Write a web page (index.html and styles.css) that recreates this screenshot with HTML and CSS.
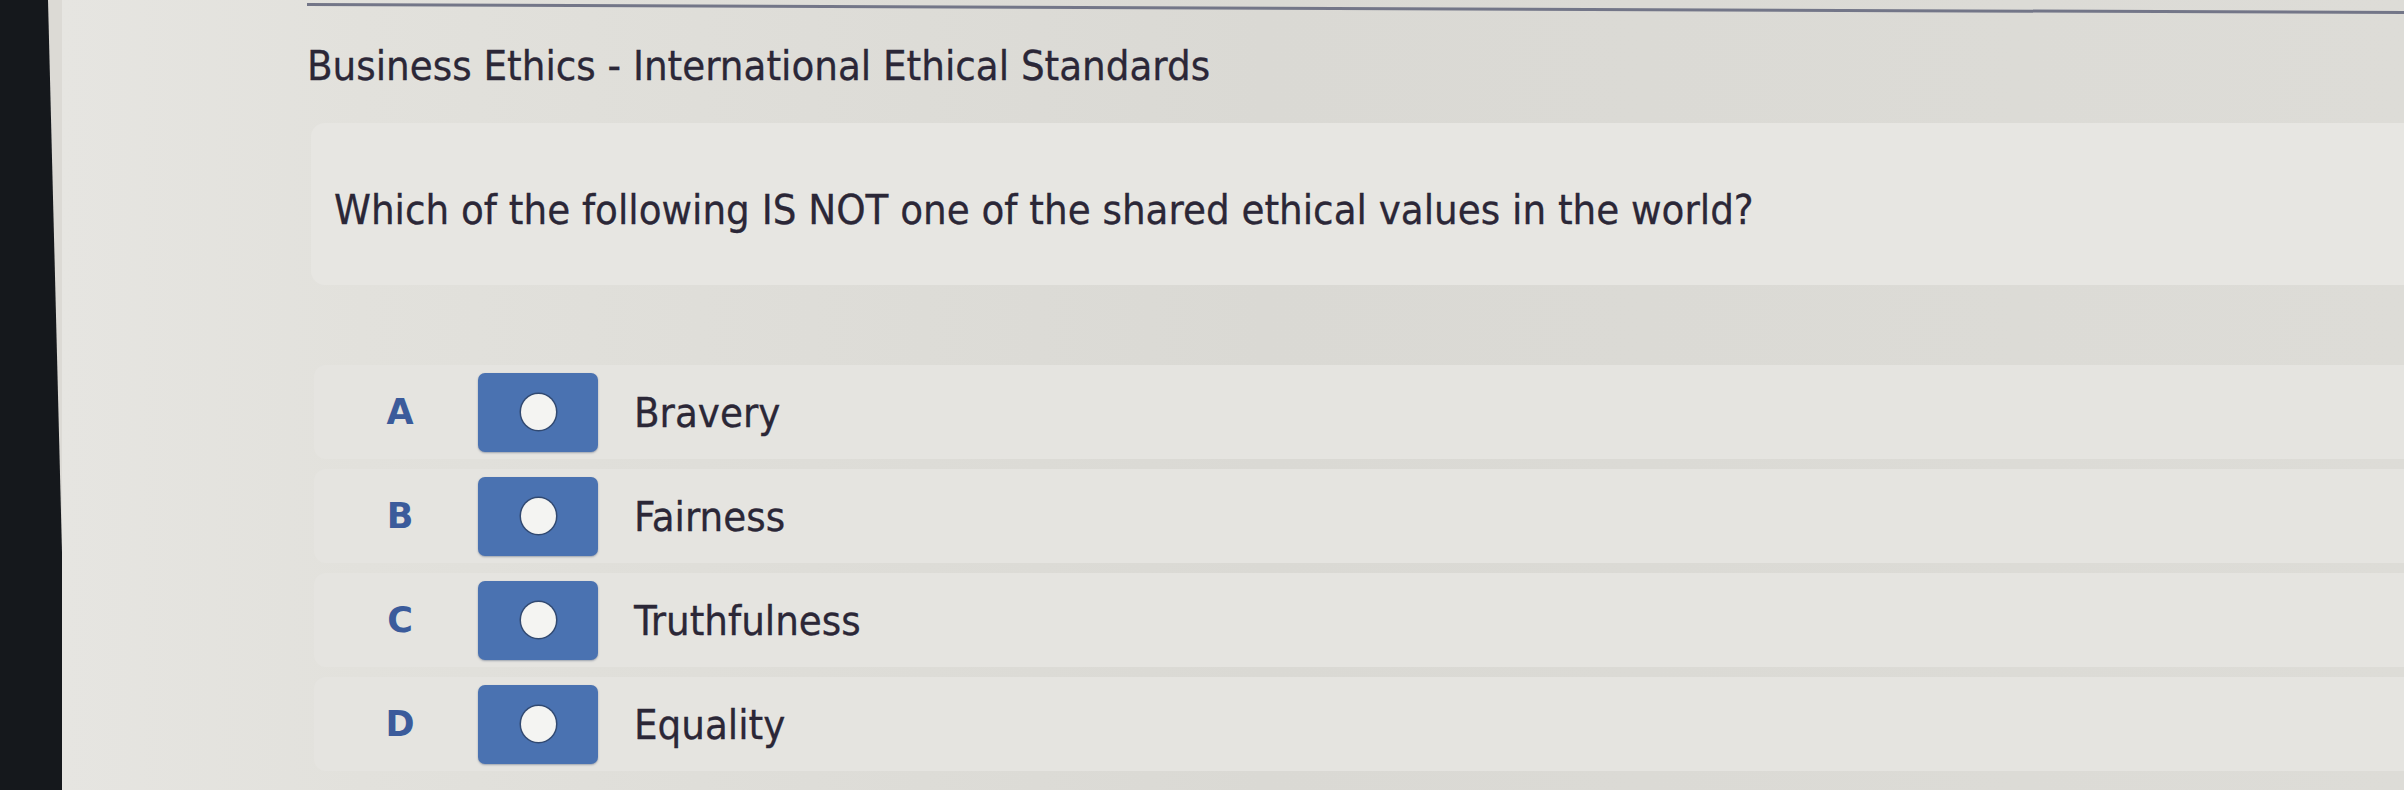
FILE: index.html
```html
<!DOCTYPE html>
<html lang="en">
<head>
<meta charset="utf-8">
<title>Business Ethics - International Ethical Standards</title>
<link rel="stylesheet" href="styles.css">
</head>
<body>
<div class="screen">
  <div class="bezel"></div>
  <main class="content">
    <div class="topline"></div>
    <h1 class="title">Business Ethics - International Ethical Standards</h1>
    <section class="question">
      <p class="question-text">Which of the following IS NOT one of the shared ethical values in the world?</p>
    </section>
    <ul class="options">
      <li class="option">
        <span class="letter">A</span>
        <span class="radio"><span class="dot"></span></span>
        <span class="label">Bravery</span>
      </li>
      <li class="option">
        <span class="letter">B</span>
        <span class="radio"><span class="dot"></span></span>
        <span class="label">Fairness</span>
      </li>
      <li class="option">
        <span class="letter">C</span>
        <span class="radio"><span class="dot"></span></span>
        <span class="label">Truthfulness</span>
      </li>
      <li class="option">
        <span class="letter">D</span>
        <span class="radio"><span class="dot"></span></span>
        <span class="label">Equality</span>
      </li>
    </ul>
  </main>
</div>
</body>
</html>
```

FILE: styles.css
```css
* { box-sizing: border-box; }
html, body { margin: 0; padding: 0; }
body {
  width: 2404px;
  height: 790px;
  overflow: hidden;
  background: #dcdad5;
  font-family: "DejaVu Sans Condensed", "DejaVu Sans", sans-serif;
  color: #2b2737;
}
.screen {
  display: flex;
  height: 790px;
}
.bezel {
  width: 62px;
  flex: none;
  background: #15181c;
  clip-path: polygon(0 0, 48px 0, 68px 100%, 0 100%);
}
.content {
  flex: 1;
  padding-left: 245px;
  background: linear-gradient(90deg, #e6e5e1 0, #e2e1dc 300px, #dad9d4 1200px, #dddcd7 100%);
}
.topline {
  height: 3px;
  margin-top: 3px;
  margin-right: -20px;
  background: #737688;
  transform-origin: left center;
  transform: rotate(0.22deg);
}
.title {
  margin: 34px 0 0 0;
  font-size: 41.5px;
  font-weight: normal;
  line-height: 52px;
  -webkit-text-stroke: 0.3px #2b2737;
}
.question {
  margin: 31px 0 0 4px;
  height: 162px;
  background: #e7e6e2;
  border-radius: 14px 0 0 14px;
  display: flex;
  align-items: center;
  padding: 12px 0 0 23px;
}
.question-text {
  margin: 0;
  font-size: 41.5px;
  line-height: 52px;
  -webkit-text-stroke: 0.3px #2b2737;
}
.options {
  list-style: none;
  margin: 80px 0 0 7px;
  padding: 0;
  display: flex;
  flex-direction: column;
  gap: 10px;
}
.option {
  height: 94px;
  background: #e5e4e0;
  border-radius: 12px 0 0 12px;
  display: flex;
  align-items: center;
}
.letter {
  width: 164px;
  padding-left: 8px;
  text-align: center;
  font-family: "DejaVu Sans", sans-serif;
  font-weight: bold;
  font-size: 35px;
  color: #3b5b9b;
}
.radio {
  width: 120px;
  height: 79px;
  background: #4a72b1;
  border-radius: 7px;
  display: flex;
  align-items: center;
  justify-content: center;
  box-shadow: 0 1px 2px rgba(20, 40, 80, 0.35);
}
.dot {
  width: 35px;
  height: 36px;
  border-radius: 50%;
  background: #f4f4f2;
  box-shadow: 0 0 0 1.5px rgba(30, 40, 60, 0.55);
}
.label {
  margin-left: 36px;
  font-size: 41.5px;
  -webkit-text-stroke: 0.3px #2b2737;
}
```
